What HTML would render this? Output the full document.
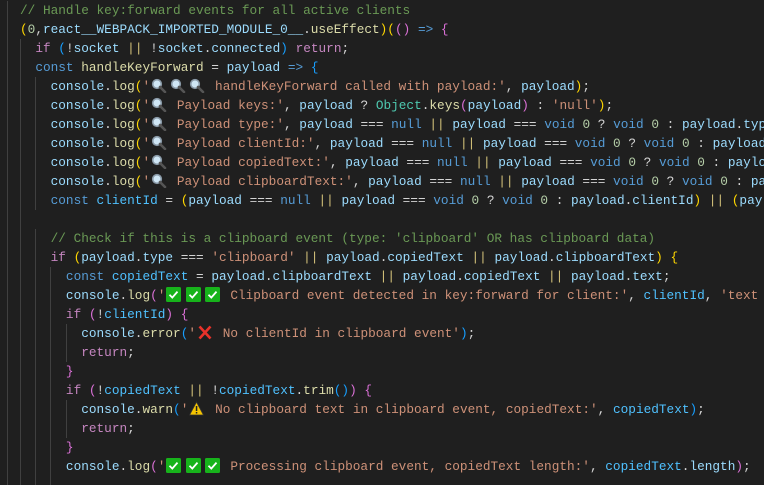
<!DOCTYPE html>
<html><head><meta charset="utf-8"><style>
html,body{margin:0;padding:0;background:#1f1f1f;width:764px;height:485px;overflow:hidden}
.ed{position:absolute;top:1px;left:0;width:764px;height:484px;overflow:hidden;font-family:"Liberation Mono",monospace;font-size:12.75px;color:#d4d4d4}
.l{position:absolute;left:20px;height:19px;line-height:19px;white-space:pre;}
.g{position:absolute;width:1px;background:#404040;height:19px}
.c{color:#6a9955}.k{color:#c586c0}.b{color:#569cd6}.v{color:#9cdcfe}.cv{color:#4fc1ff}.f{color:#dcdcaa}.s{color:#ce9178}.n{color:#b5cea8}.t{color:#4ec9b0}
.p1{color:#ffd700}.p2{color:#da70d6}.p3{color:#179fff}.o{color:#d4c27a}
.e{display:inline-block;width:19.1px;height:15px;vertical-align:-3px;position:relative}
.e svg{position:absolute;left:1px;top:0}
</style></head><body>
<div class="ed">
<div class="g" style="left:7px;top:0;height:485px"></div>
<div class="g" style="left:20px;top:38px;height:447px"></div>
<div class="g" style="left:35px;top:76px;height:133px"></div>
<div class="g" style="left:35px;top:228px;height:257px"></div>
<div class="g" style="left:50px;top:266px;height:219px"></div>
<div class="g" style="left:66px;top:323px;height:38px"></div>
<div class="g" style="left:66px;top:399px;height:38px"></div>

<div class="l" style="top:0px"><span class="c">// Handle key:forward events for all active clients</span></div>
<div class="l" style="top:19px"><span class="p1">(</span><span class="n">0</span>,<span class="v">react__WEBPACK_IMPORTED_MODULE_0__</span>.<span class="f">useEffect</span><span class="p1">)(</span><span class="p2">()</span> <span class="b">=&gt;</span> <span class="p2">{</span></div>
<div class="l" style="top:38px">  <span class="k">if</span> <span class="p3">(</span>!<span class="v">socket</span> <span class="o">||</span> !<span class="v">socket</span>.<span class="v">connected</span><span class="p3">)</span> <span class="k">return</span>;</div>
<div class="l" style="top:57px">  <span class="b">const</span> <span class="f">handleKeyForward</span> = <span class="v">payload</span> <span class="b">=&gt;</span> <span class="p3">{</span></div>
<div class="l" style="top:76px">    <span class="v">console</span>.<span class="f">log</span><span class="p1">(</span><span class="s">'<span class="e"><svg width="16" height="15"><circle cx="6" cy="6" r="4.3" fill="#cfe6f5" stroke="#8a9aa8" stroke-width="1.6"/><path d="M9 9l5 5" stroke="#555" stroke-width="2.6" stroke-linecap="round"/></svg></span><span class="e"><svg width="16" height="15"><circle cx="6" cy="6" r="4.3" fill="#cfe6f5" stroke="#8a9aa8" stroke-width="1.6"/><path d="M9 9l5 5" stroke="#555" stroke-width="2.6" stroke-linecap="round"/></svg></span><span class="e"><svg width="16" height="15"><circle cx="6" cy="6" r="4.3" fill="#cfe6f5" stroke="#8a9aa8" stroke-width="1.6"/><path d="M9 9l5 5" stroke="#555" stroke-width="2.6" stroke-linecap="round"/></svg></span> handleKeyForward called with payload:'</span>, <span class="v">payload</span><span class="p1">)</span>;</div>
<div class="l" style="top:95px">    <span class="v">console</span>.<span class="f">log</span><span class="p1">(</span><span class="s">'<span class="e"><svg width="16" height="15"><circle cx="6" cy="6" r="4.3" fill="#cfe6f5" stroke="#8a9aa8" stroke-width="1.6"/><path d="M9 9l5 5" stroke="#555" stroke-width="2.6" stroke-linecap="round"/></svg></span> Payload keys:'</span>, <span class="v">payload</span> ? <span class="t">Object</span>.<span class="f">keys</span><span class="p2">(</span><span class="v">payload</span><span class="p2">)</span> : <span class="s">'null'</span><span class="p1">)</span>;</div>
<div class="l" style="top:114px">    <span class="v">console</span>.<span class="f">log</span><span class="p1">(</span><span class="s">'<span class="e"><svg width="16" height="15"><circle cx="6" cy="6" r="4.3" fill="#cfe6f5" stroke="#8a9aa8" stroke-width="1.6"/><path d="M9 9l5 5" stroke="#555" stroke-width="2.6" stroke-linecap="round"/></svg></span> Payload type:'</span>, <span class="v">payload</span> === <span class="b">null</span> <span class="o">||</span> <span class="v">payload</span> === <span class="b">void</span> <span class="n">0</span> ? <span class="b">void</span> <span class="n">0</span> : <span class="v">payload</span>.<span class="v">type</span><span class="p1">)</span>;</div>
<div class="l" style="top:133px">    <span class="v">console</span>.<span class="f">log</span><span class="p1">(</span><span class="s">'<span class="e"><svg width="16" height="15"><circle cx="6" cy="6" r="4.3" fill="#cfe6f5" stroke="#8a9aa8" stroke-width="1.6"/><path d="M9 9l5 5" stroke="#555" stroke-width="2.6" stroke-linecap="round"/></svg></span> Payload clientId:'</span>, <span class="v">payload</span> === <span class="b">null</span> <span class="o">||</span> <span class="v">payload</span> === <span class="b">void</span> <span class="n">0</span> ? <span class="b">void</span> <span class="n">0</span> : <span class="v">payload</span>.<span class="v">clientId</span><span class="p1">)</span>;</div>
<div class="l" style="top:152px">    <span class="v">console</span>.<span class="f">log</span><span class="p1">(</span><span class="s">'<span class="e"><svg width="16" height="15"><circle cx="6" cy="6" r="4.3" fill="#cfe6f5" stroke="#8a9aa8" stroke-width="1.6"/><path d="M9 9l5 5" stroke="#555" stroke-width="2.6" stroke-linecap="round"/></svg></span> Payload copiedText:'</span>, <span class="v">payload</span> === <span class="b">null</span> <span class="o">||</span> <span class="v">payload</span> === <span class="b">void</span> <span class="n">0</span> ? <span class="b">void</span> <span class="n">0</span> : <span class="v">payload</span>.<span class="v">copiedText</span><span class="p1">)</span>;</div>
<div class="l" style="top:171px">    <span class="v">console</span>.<span class="f">log</span><span class="p1">(</span><span class="s">'<span class="e"><svg width="16" height="15"><circle cx="6" cy="6" r="4.3" fill="#cfe6f5" stroke="#8a9aa8" stroke-width="1.6"/><path d="M9 9l5 5" stroke="#555" stroke-width="2.6" stroke-linecap="round"/></svg></span> Payload clipboardText:'</span>, <span class="v">payload</span> === <span class="b">null</span> <span class="o">||</span> <span class="v">payload</span> === <span class="b">void</span> <span class="n">0</span> ? <span class="b">void</span> <span class="n">0</span> : <span class="v">payload</span>.<span class="v">clipboardText</span><span class="p1">)</span>;</div>
<div class="l" style="top:190px">    <span class="b">const</span> <span class="cv">clientId</span> = <span class="p1">(</span><span class="v">payload</span> === <span class="b">null</span> <span class="o">||</span> <span class="v">payload</span> === <span class="b">void</span> <span class="n">0</span> ? <span class="b">void</span> <span class="n">0</span> : <span class="v">payload</span>.<span class="v">clientId</span><span class="p1">)</span> <span class="o">||</span> <span class="p1">(</span><span class="v">payload</span> === <span class="b">null</span></div>
<div class="l" style="top:228px">    <span class="c">// Check if this is a clipboard event (type: 'clipboard' OR has clipboard data)</span></div>
<div class="l" style="top:247px">    <span class="k">if</span> <span class="p1">(</span><span class="v">payload</span>.<span class="v">type</span> === <span class="s">'clipboard'</span> <span class="o">||</span> <span class="v">payload</span>.<span class="v">copiedText</span> <span class="o">||</span> <span class="v">payload</span>.<span class="v">clipboardText</span><span class="p1">)</span> <span class="p1">{</span></div>
<div class="l" style="top:266px">      <span class="b">const</span> <span class="cv">copiedText</span> = <span class="v">payload</span>.<span class="v">clipboardText</span> <span class="o">||</span> <span class="v">payload</span>.<span class="v">copiedText</span> <span class="o">||</span> <span class="v">payload</span>.<span class="v">text</span>;</div>
<div class="l" style="top:285px">      <span class="v">console</span>.<span class="f">log</span><span class="p2">(</span><span class="s">'<span class="e"><svg width="16" height="15"><rect x="0" y="0" width="15" height="15" rx="1.5" fill="#17b31b"/><path d="M3.5 7.8l2.8 2.8 5.2-6" stroke="#fff" stroke-width="1.8" fill="none"/></svg></span><span class="e"><svg width="16" height="15"><rect x="0" y="0" width="15" height="15" rx="1.5" fill="#17b31b"/><path d="M3.5 7.8l2.8 2.8 5.2-6" stroke="#fff" stroke-width="1.8" fill="none"/></svg></span><span class="e"><svg width="16" height="15"><rect x="0" y="0" width="15" height="15" rx="1.5" fill="#17b31b"/><path d="M3.5 7.8l2.8 2.8 5.2-6" stroke="#fff" stroke-width="1.8" fill="none"/></svg></span> Clipboard event detected in key:forward for client:'</span>, <span class="cv">clientId</span>, <span class="s">'text</span></div>
<div class="l" style="top:304px">      <span class="k">if</span> <span class="p2">(</span>!<span class="cv">clientId</span><span class="p2">)</span> <span class="p2">{</span></div>
<div class="l" style="top:323px">        <span class="v">console</span>.<span class="f">error</span><span class="p3">(</span><span class="s">'<span class="e"><svg width="16" height="15"><path d="M2.5 1.5l11 12M13.5 1.5l-11 12" stroke="#e8322a" stroke-width="2.6"/></svg></span> No clientId in clipboard event'</span><span class="p3">)</span>;</div>
<div class="l" style="top:342px">        <span class="k">return</span>;</div>
<div class="l" style="top:361px">      <span class="p2">}</span></div>
<div class="l" style="top:380px">      <span class="k">if</span> <span class="p2">(</span>!<span class="cv">copiedText</span> <span class="o">||</span> !<span class="cv">copiedText</span>.<span class="f">trim</span><span class="p3">()</span><span class="p2">)</span> <span class="p2">{</span></div>
<div class="l" style="top:399px">        <span class="v">console</span>.<span class="f">warn</span><span class="p3">(</span><span class="s">'<span class="e"><svg width="16" height="15"><path d="M7.5 1L14.5 14H0.5Z" fill="#f5c400" stroke="#333" stroke-width="0.8"/><rect x="6.8" y="5" width="1.5" height="5" fill="#222"/><rect x="6.8" y="11" width="1.5" height="1.5" fill="#222"/></svg></span> No clipboard text in clipboard event, copiedText:'</span>, <span class="cv">copiedText</span><span class="p3">)</span>;</div>
<div class="l" style="top:418px">        <span class="k">return</span>;</div>
<div class="l" style="top:437px">      <span class="p2">}</span></div>
<div class="l" style="top:456px">      <span class="v">console</span>.<span class="f">log</span><span class="p2">(</span><span class="s">'<span class="e"><svg width="16" height="15"><rect x="0" y="0" width="15" height="15" rx="1.5" fill="#17b31b"/><path d="M3.5 7.8l2.8 2.8 5.2-6" stroke="#fff" stroke-width="1.8" fill="none"/></svg></span><span class="e"><svg width="16" height="15"><rect x="0" y="0" width="15" height="15" rx="1.5" fill="#17b31b"/><path d="M3.5 7.8l2.8 2.8 5.2-6" stroke="#fff" stroke-width="1.8" fill="none"/></svg></span><span class="e"><svg width="16" height="15"><rect x="0" y="0" width="15" height="15" rx="1.5" fill="#17b31b"/><path d="M3.5 7.8l2.8 2.8 5.2-6" stroke="#fff" stroke-width="1.8" fill="none"/></svg></span> Processing clipboard event, copiedText length:'</span>, <span class="cv">copiedText</span>.<span class="v">length</span><span class="p2">)</span>;</div>
</div>
</body></html>
